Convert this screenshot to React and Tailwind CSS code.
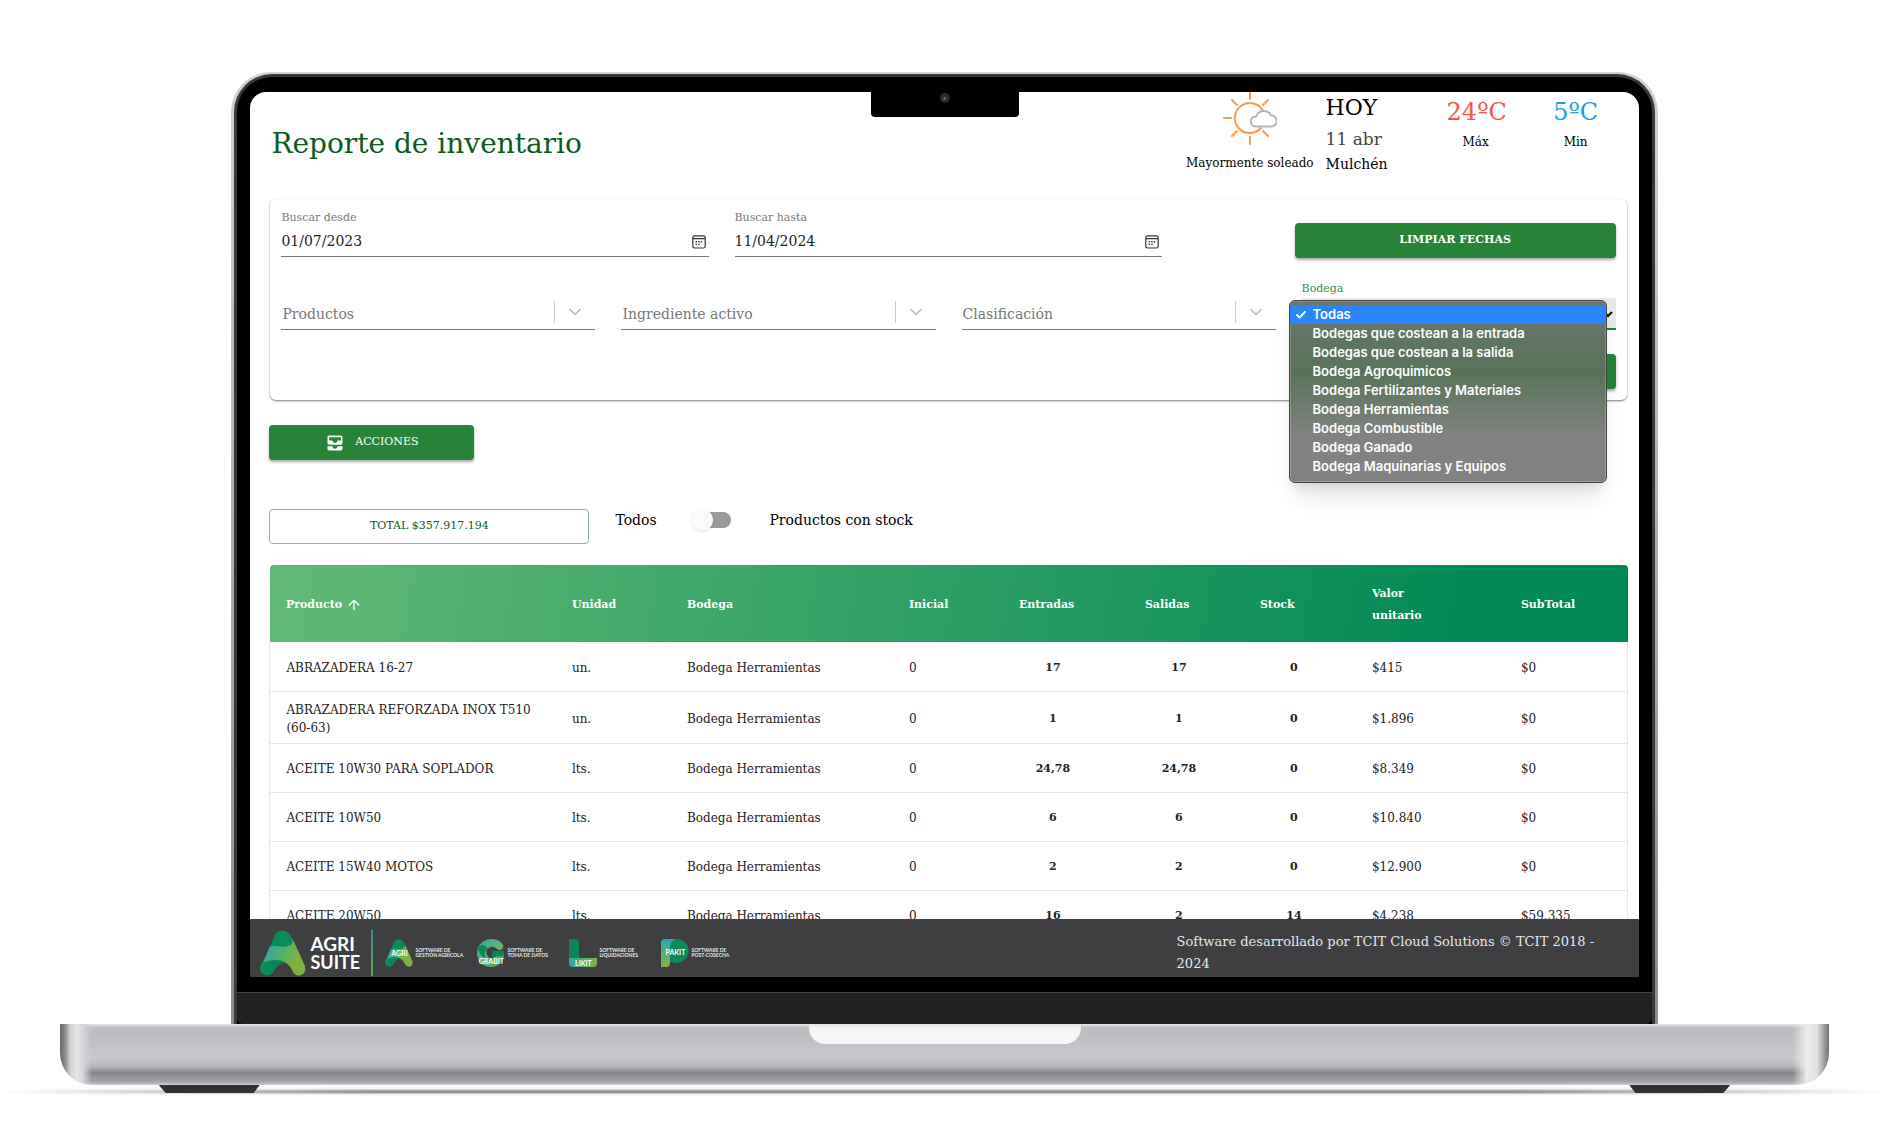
import { useState } from 'react'
import { ChevronDown, Check, ArrowUp } from 'lucide-react'
import { MdAllInbox } from 'react-icons/md'

const BODEGAS = [
  'Todas',
  'Bodegas que costean a la entrada',
  'Bodegas que costean a la salida',
  'Bodega Agroquimicos',
  'Bodega Fertilizantes y Materiales',
  'Bodega Herramientas',
  'Bodega Combustible',
  'Bodega Ganado',
  'Bodega Maquinarias y Equipos',
]

const ROWS = [
  ['ABRAZADERA 16-27', 'un.', '17', '17', '0', '$415', '$0'],
  ['ABRAZADERA REFORZADA INOX T510 (60-63)', 'un.', '1', '1', '0', '$1.896', '$0'],
  ['ACEITE 10W30 PARA SOPLADOR', 'lts.', '24,78', '24,78', '0', '$8.349', '$0'],
  ['ACEITE 10W50', 'lts.', '6', '6', '0', '$10.840', '$0'],
  ['ACEITE 15W40 MOTOS', 'lts.', '2', '2', '0', '$12.900', '$0'],
  ['ACEITE 20W50', 'lts.', '16', '2', '14', '$4.238', '$59.335'],
]

function CalendarIcon() {
  return (
    <svg viewBox="0 0 14 14" className="size-[14px]" fill="none" stroke="#333" strokeWidth="1.2">
      <rect x="0.8" y="0.8" width="12.4" height="12.2" rx="1.8" />
      <path d="M1 3.6h12" />
      <path d="M6.2 6.8h1.4M8.8 6.8h1.4M3.6 9.4H5M6.2 9.4h1.4M3.6 6.8H5" strokeWidth="1.4" />
    </svg>
  )
}

function SunCloudIcon() {
  return (
    <svg viewBox="0 0 54 54" className="h-[54px] w-[54px]" fill="none" strokeWidth="2" strokeLinecap="round">
      <path
        stroke="#fb9a4f"
        d="M38 36A15 15 0 1 1 40.500 20M27 0v7M27 45v7M1 26h7M9 8l5 5M45 8l-5 5M9 44l5-5M45 44l-5-5"
      />
      <path
        stroke="#b4b6bb"
        fill="#fff"
        d="M32.500 34.500h15.500a5.500 5.500 0 0 0 .5-11 1 1 0 0 1-.8-.5 8 8 0 0 0-14.500 1.500 5 5 0 0 0-.7 10z"
      />
    </svg>
  )
}

function AgriMark({ className }) {
  return (
    <svg viewBox="0 0 46 46" className={className}>
      <defs>
        <linearGradient id="agriBand" x1="0" y1="0.3" x2="1" y2="0.8">
          <stop offset="0" stopColor="#27a7b4" />
          <stop offset="0.5" stopColor="#5fb35a" />
          <stop offset="0.75" stopColor="#7fb242" />
        </linearGradient>
        <linearGradient id="agriFoot" x1="0" y1="0" x2="1" y2="0">
          <stop offset="0" stopColor="#0c9158" />
          <stop offset="1" stopColor="#087a5a" />
        </linearGradient>
      </defs>
      {/* Top lobe */}
      <path d="M15 5a8.500 8.500 0 0 1 15 0l6 12-22 6-5-4z" fill="#0b8b5a" />
      {/* Left foot */}
      <path d="M3 31C7 27 20 27 24 33c-4 1-7 3-10 8-3 6-10 5-12.500 2C-.5 40 0 37 1 35z" fill="url(#agriFoot)" />
      {/* Band crossing to the right foot */}
      <path
        d="M9.500 17.500c4-4 11 2 21-2.500 2-1 2.500-3.500 1.500-7.500L44.500 35c2.500 6-1 10.500-5.500 10.500-4 0-5.500-2.500-7-5.500C27 29 14 28 3 32.500z"
        fill="url(#agriBand)"
      />
    </svg>
  )
}

function GrabitMark() {
  return (
    <svg viewBox="0 0 28 28" className="size-7">
      <defs>
        <linearGradient id="grabitRing" x1="0" y1="0" x2="1" y2="1">
          <stop offset="0" stopColor="#27a0a0" />
          <stop offset="0.5" stopColor="#5fb574" />
          <stop offset="1" stopColor="#4ba551" />
        </linearGradient>
      </defs>
      <path
        d="M14 0c6 0 10 2.500 12 6 1.500 3.500-3 6.500-6 4-3-2.500-6-3-9-.5-2.500 2.500-2 7 1 9 2 1 4 .5 5-.5h-2v-6h11c3 9-4 16-12 16C5 28 0 21.500 0 14S6 0 14 0z"
        fill="url(#grabitRing)"
      />
      <path d="M1 9c2 6 3 9 8 10-2-3-1.500-7 2-9.500C7 5 3 5 1 9z" fill="#0b8659" />
      <path d="M15 12h11v5l-9 1h-2z" fill="#0b8659" />
    </svg>
  )
}

function LikitMark() {
  return (
    <svg viewBox="0 0 28 28" className="size-7">
      <defs>
        <linearGradient id="likitBar">
          <stop offset="0" stopColor="#2aa9ad" />
          <stop offset="0.5" stopColor="#4fae68" />
          <stop offset="1" stopColor="#7fb242" />
        </linearGradient>
      </defs>
      <path d="M0 0h6a4 4 0 0 1 4 4v15H0z" fill="#0b8659" />
      <path d="M0 19h28v5a4 4 0 0 1-4 4H4a4 4 0 0 1-4-4z" fill="url(#likitBar)" />
    </svg>
  )
}

function PakitMark() {
  return (
    <svg viewBox="0 0 28 28" className="size-7">
      <defs>
        <linearGradient id="pakitStem" x1="0" y1="0" x2="0" y2="1">
          <stop offset="0" stopColor="#2aa9b5" />
          <stop offset="1" stopColor="#86b440" />
        </linearGradient>
      </defs>
      <path d="M4 0h11L9 24a4 4 0 0 1-4 4H0V4a4 4 0 0 1 4-4z" fill="url(#pakitStem)" />
      <path d="M16 0a12 12 0 1 1-7 22V9c0-5 3-9 7-9z" fill="#0b8b5a" />
    </svg>
  )
}

function Product({ mark, name, lines, nameClass }) {
  return (
    <div className="flex w-[92px] items-center gap-[2px]">
      <div className="relative">
        {mark}
        <span className={'absolute inset-x-0 text-center font-[Lato] text-[7px] leading-[8px] font-bold text-white ' + nameClass}>
          {name}
        </span>
      </div>
      <p className="font-[Lato] text-[5px] leading-[5px] font-bold whitespace-nowrap text-gray-200">
        {lines[0]}
        <br />
        {lines[1]}
      </p>
    </div>
  )
}

function DateField({ id, label, initial }) {
  const [value, setValue] = useState(initial)
  return (
    <div className="flex-1">
      <label htmlFor={id} className="block text-[11px] leading-[18px] text-[#777]">
        {label}
      </label>
      <div className="flex h-[30px] items-center border-b border-[#777] pr-[3px]">
        <input
          id={id}
          value={value}
          onChange={(e) => setValue(e.target.value)}
          className="min-w-0 flex-1 text-[14px] text-[#222] outline-none"
        />
        <button type="button" aria-label={'Abrir calendario: ' + label}>
          <CalendarIcon />
        </button>
      </div>
    </div>
  )
}

function FilterSelect({ label }) {
  return (
    <div className="mt-[10px] flex h-[32px] flex-1 items-center border-b border-[#777]">
      <select aria-label={label} className="min-w-0 flex-1 appearance-none px-px pt-[2px] text-[14px] text-[#777] outline-none">
        <option>{label}</option>
      </select>
      <span className="mb-1 h-[22px] w-px bg-[#ccc]" />
      <ChevronDown className="mx-[10px] mb-1 size-5 text-[#bbb]" />
    </div>
  )
}

function BodegaSelect() {
  const [selected, setSelected] = useState('Todas')
  return (
    <div className="relative flex-1">
      <label htmlFor="bodega" className="-mt-2 block text-[11px] leading-[18px] text-[#2f8f45]">
        Bodega
      </label>
      <select
        id="bodega"
        value={selected}
        onChange={(e) => setSelected(e.target.value)}
        className="h-[32px] w-full border-b-2 border-[#278338] bg-[#e8e8e8] text-[14px]"
      >
        {BODEGAS.map((b) => (
          <option key={b}>{b}</option>
        ))}
      </select>
      {/* Open menu */}
      <ul
        role="listbox"
        aria-label="Bodega"
        className="absolute top-3 right-[9px] -left-[13px] z-20 rounded-md border border-[#444] bg-linear-to-b from-[#6b766d] via-[#58735a] via-40% to-[#828282] to-75% pt-1 pb-[6px] font-[Inter] text-[13px] leading-[19px] font-semibold text-white shadow-xl ring-1 ring-white/20 ring-inset"
      >
        {BODEGAS.map((b) => (
          <li
            key={b}
            role="option"
            aria-selected={b === selected}
            onClick={() => setSelected(b)}
            className={'flex items-center whitespace-nowrap ' + (b === selected ? 'bg-[#2a84fb]' : '')}
          >
            <span className="flex w-[23px] justify-center">
              {b === selected && <Check className="size-3" strokeWidth={4} />}
            </span>
            {b}
          </li>
        ))}
      </ul>
    </div>
  )
}

function Header() {
  return (
    <header className="flex h-[107px] items-start justify-between pr-10 pl-[21px]">
      <h1 className="mt-[32px] text-[28px] leading-10 text-[#0c5a1c]">Reporte de inventario</h1>
      <div className="flex items-start leading-4 text-black">
        <div className="flex flex-col items-center text-[12px]">
          <SunCloudIcon />
          <span className="mt-[9px] whitespace-nowrap">Mayormente soleado</span>
        </div>
        <div className="ml-3 w-[121px]">
          <p className="text-[22px] leading-8">HOY</p>
          <p className="text-[17px] leading-[30px] text-[#444]">11 abr</p>
          <p className="text-[14px] leading-5">Mulchén</p>
        </div>
        <div className="w-[58px] text-center">
          <p className="text-[24px] leading-[40px] text-[#f4574a]">24ºC</p>
          <p className="text-[12px] leading-5">Máx</p>
        </div>
        <div className="ml-[48px] w-[46px] text-center">
          <p className="text-[24px] leading-[40px] text-[#1e9bea]">5ºC</p>
          <p className="text-[12px] leading-5">Min</p>
        </div>
      </div>
    </header>
  )
}

function Filters() {
  return (
    <section className="mr-3 ml-5 h-[201px] rounded-md px-[11px] pt-[10px] shadow-[0_1px_2px_rgba(0,0,0,0.5),0_0_2px_rgba(0,0,0,0.05)]">
      <div className="flex items-start">
        <div className="flex flex-1 gap-[26px]">
          <DateField id="desde" label="Buscar desde" initial="01/07/2023" />
          <DateField id="hasta" label="Buscar hasta" initial="11/04/2024" />
        </div>
        <button
          type="button"
          className="mt-[14px] ml-[133px] h-[35px] w-[321px] rounded bg-[#278338] text-[11px] font-semibold text-white shadow-[0_2px_3px_rgba(0,0,0,0.35)]"
        >
          LIMPIAR FECHAS
        </button>
      </div>
      <div className="mt-[30px] flex gap-[26px]">
        <FilterSelect label="Productos" />
        <FilterSelect label="Ingrediente activo" />
        <FilterSelect label="Clasificación" />
        <BodegaSelect />
      </div>
      <div className="mt-6 flex justify-end">
        <button
          type="button"
          aria-label="Buscar"
          className="h-[35px] w-[314px] rounded bg-[#278338] shadow-[0_2px_3px_rgba(0,0,0,0.35)]"
        />
      </div>
    </section>
  )
}

function InventoryTable() {
  return (
    <table className="w-full table-fixed text-left text-[11px] text-[#222]">
      <colgroup>
        <col className="w-[286px]" />
        <col className="w-[115px]" />
        <col className="w-[222px]" />
        <col className="w-[110px]" />
        <col className="w-[126px]" />
        <col className="w-[115px]" />
        <col className="w-[112px]" />
        <col className="w-[149px]" />
        <col className="w-[123px]" />
      </colgroup>
      <thead>
        <tr className="h-[77px] bg-linear-[100deg] from-[#63b976] to-[#008855] to-90% leading-[22px] text-white [&>th]:px-4 [&>th]:pt-[2px] [&>th]:font-semibold [&>th:first-child]:rounded-tl [&>th:last-child]:rounded-tr">
          <th>
            <span className="flex items-center gap-1">
              Producto <ArrowUp className="size-4" />
            </span>
          </th>
          <th>Unidad</th>
          <th>Bodega</th>
          <th>Inicial</th>
          <th>Entradas</th>
          <th>Salidas</th>
          <th>Stock</th>
          <th>
            Valor
            <br />
            unitario
          </th>
          <th>SubTotal</th>
        </tr>
      </thead>
      <tbody>
        {ROWS.map(([producto, unidad, entradas, salidas, stock, valor, subtotal]) => (
          <tr
            key={producto}
            className="h-[49px] border-x border-b border-gray-200 text-[12px] leading-[18px] [&>td]:px-4 [&>td]:pt-[9px] [&>td]:pb-[6px]"
          >
            <td>{producto}</td>
            <td>{unidad}</td>
            <td>Bodega Herramientas</td>
            <td>0</td>
            {[entradas, salidas, stock].map((n, i) => (
              <td key={i} className="text-[11px] font-semibold">
                <div className="w-[68px] text-center">{n}</div>
              </td>
            ))}
            <td>{valor}</td>
            <td>{subtotal}</td>
          </tr>
        ))}
      </tbody>
    </table>
  )
}

function Footer() {
  return (
    <footer className="flex h-[58px] shrink-0 items-center bg-[#3f3f41] pt-[10px] pr-8 pl-[10px]">
      <AgriMark className="size-[46px]" />
      <p className="ml-1 w-[50px] font-[Lato] text-[19px] leading-[19px] font-bold text-white">
        <span className="block">AGRI</span>
        <span className="block text-[18px]">SUITE</span>
      </p>
      <span className="ml-[11px] h-[46px] w-[2px] bg-linear-to-b from-[#2b8f92] to-[#5ba84f]" />
      <div className="ml-3 flex">
        <Product mark={<AgriMark className="size-7" />} name="AGRI" nameClass="top-[10px]" lines={['SOFTWARE DE', 'GESTIÓN AGRÍCOLA']} />
        <Product mark={<GrabitMark />} name="GRABIT" nameClass="top-[18px]" lines={['SOFTWARE DE', 'TOMA DE DATOS']} />
        <Product mark={<LikitMark />} name="LIKIT" nameClass="top-[20px]" lines={['SOFTWARE DE', 'LIQUIDACIONES']} />
        <Product mark={<PakitMark />} name="PAKIT" nameClass="top-[9px]" lines={['SOFTWARE DE', 'POST-COSECHA']} />
      </div>
      <p className="ml-auto w-[430px] text-[13px] leading-[22px] text-gray-200">
        Software desarrollado por TCIT Cloud Solutions © TCIT 2018 - 2024
      </p>
    </footer>
  )
}

function InventoryReport() {
  const [onlyStock, setOnlyStock] = useState(false)
  return (
    <div className="flex aspect-[1388/885] flex-col overflow-hidden rounded-t-2xl bg-white">
      <main className="min-h-0 flex-1 overflow-hidden">
        <Header />
        <Filters />
        <div className="mt-[25px] mr-3 ml-[19px]">
          <button
            type="button"
            className="flex h-[35px] w-[205px] items-center justify-center gap-[10px] rounded bg-[#278338] text-[11px] text-white shadow-[0_2px_3px_rgba(0,0,0,0.35)]"
          >
            <MdAllInbox className="size-5" />
            ACCIONES
          </button>
          <div className="mt-[49px] mb-[21px] flex">
            <button type="button" className="h-[35px] w-[320px] rounded border border-[#8db596] text-[11px] text-[#0c5a1c]">
              TOTAL $357.917.194
            </button>
            <label className="ml-[26px] flex h-[22px] items-center text-[14px] text-black">
              <span className="w-[77px]">Todos</span>
              <input
                type="checkbox"
                role="switch"
                checked={onlyStock}
                onChange={(e) => setOnlyStock(e.target.checked)}
                className="relative h-4 w-[39px] appearance-none rounded-full bg-[#999] before:absolute before:-top-[3px] before:-left-px before:size-[22px] before:rounded-full before:bg-[#fafafa] before:shadow before:content-[''] checked:before:left-[18px]"
              />
              <span className="ml-[38px]">Productos con stock</span>
            </label>
          </div>
          <InventoryTable />
        </div>
      </main>
      <Footer />
    </div>
  )
}

function App() {
  return (
    <div className="flex min-h-screen flex-col items-center overflow-hidden bg-white pt-[72px] pr-[11px] font-['Roboto_Slab','DejaVu_Serif',serif]">
      {/* Lid */}
      <div className="w-[75.500%] rounded-t-[40px] bg-linear-to-b from-[#d2d2d2] to-[#8a8a90] px-[3px] pt-[2px]">
        <div className="rounded-t-[38px] bg-[#38393b] px-[3px] pt-[3px]">
          <div className="relative rounded-t-[35px] bg-black px-[13px] pt-[15px]">
            <InventoryReport />
            {/* Camera notch */}
            <div className="absolute top-0 left-1/2 flex h-10 w-[148px] -translate-x-1/2 justify-center rounded-b bg-black pt-4">
              <span className="flex size-[10px] items-center justify-center rounded-full bg-[#2b2b2d]">
                <span className="size-[3px] rounded-full bg-[#3d7c96]" />
              </span>
            </div>
            <div className="h-[15px]" />
            <div className="-mx-[13px] h-[32px] rounded-b-md border-t border-[#444] bg-[#212121]" />
          </div>
        </div>
      </div>
      {/* Base */}
      <div className="flex h-[61px] w-[93.600%] justify-center overflow-hidden rounded-b-[32px] bg-[linear-gradient(90deg,#66686a_0,#8a8b8c_5px,#d0d0d0_10px,#e6e6e6_17px,#d4d4d7_23px,transparent_32px,transparent_calc(100%-36px),#ededed_calc(100%-22px),#e0e0e0_calc(100%-12px),#707172_100%),linear-gradient(180deg,#e4e4e4_0,#bbbbc0_4px,#c8c8cc_34px,#b8b8bc_42px,#84858b_49px,#94949a_53px,#a5a5ab_58px,#d0d0d2_61px)]">
        <div className="h-5 w-[272px] rounded-b-2xl bg-[#f5f6f6] shadow-[inset_0_2px_3px_rgba(0,0,0,0.08)]" />
      </div>
      {/* Feet and ground shadow */}
      <div className="flex h-3 w-full justify-center bg-[linear-gradient(90deg,#fff_0,transparent_20%,transparent_80%,#fff_100%),linear-gradient(180deg,#fff_0,#eee_4px,#8d8d8d_6px,#999_8px,#eee_9px,#fff_12px)]">
        <div className="flex w-[83.200%] justify-between">
          <div className="h-[8px] w-[101px] bg-[#303131] [clip-path:polygon(0_0,100%_0,94%_100%,7%_100%)]" />
          <div className="h-[8px] w-[101px] bg-[#303131] [clip-path:polygon(0_0,100%_0,93%_100%,6%_100%)]" />
        </div>
      </div>
    </div>
  )
}

export default App
